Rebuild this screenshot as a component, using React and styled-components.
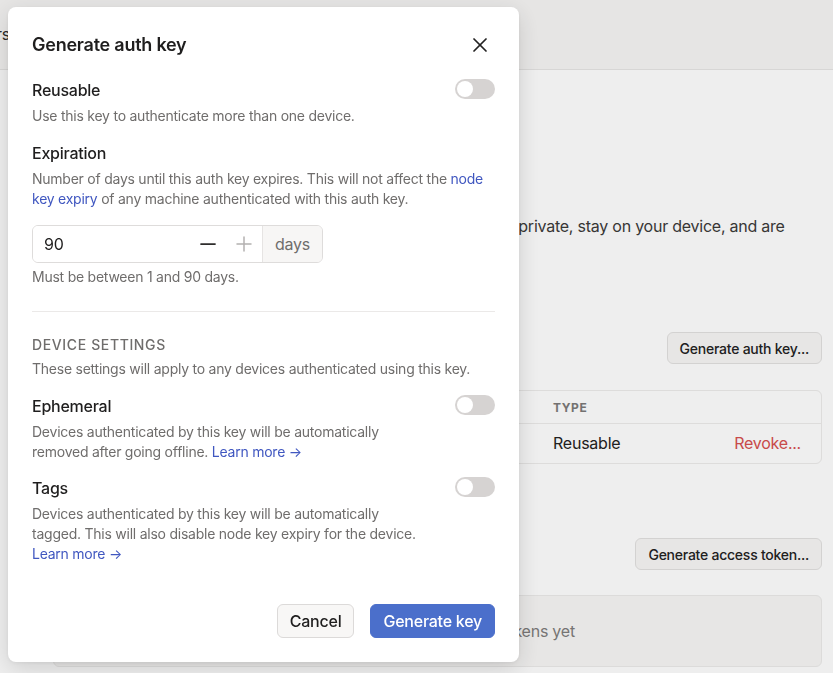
import React, { useState } from 'react';
import styled, { createGlobalStyle } from 'styled-components';
import { X, Minus, Plus } from 'lucide-react';

const GlobalStyle = createGlobalStyle`
  html, body {
    margin: 0;
    padding: 0;
    background: #fbfbfb;
  }
  body {
    font-family: Inter, "Noto Sans", "Liberation Sans", sans-serif;
    color: #232222;
    letter-spacing: -0.015em;
    -webkit-font-smoothing: antialiased;
  }
  button, input {
    letter-spacing: inherit;
  }
  * {
    box-sizing: border-box;
  }
`;

const Page = styled.div`
  width: 100vw;
  height: 100vh;
  overflow: hidden;
  display: flex;
  flex-direction: column;
  background: #fbfbfb;
`;

const Header = styled.header`
  height: 70px;
  flex-shrink: 0;
  background: #f3f2f1;
  border-bottom: 1px solid #e3e2e1;
  display: flex;
  align-items: center;
  overflow: hidden;
`;

const Nav = styled.nav`
  display: flex;
  gap: 28px;
  margin-left: -33px;
  padding-bottom: 2px;
`;

const NavItem = styled.span`
  font-size: 16px;
  color: #2e2d2c;
  white-space: nowrap;
`;

const Main = styled.main`
  padding: 40px 11px 0 53px;
  display: flex;
  flex-direction: column;
`;

const PageTitle = styled.h1`
  margin: 0 0 40px;
  font-size: 24px;
  line-height: 32px;
  font-weight: 600;
`;

const SectionTitle = styled.h2`
  margin: 0 0 4px;
  font-size: 18px;
  line-height: 28px;
  font-weight: 600;
`;

const Paragraph = styled.p`
  margin: 0;
  font-size: 16px;
  line-height: 24px;
  color: #3a3938;
`;

const Toolbar = styled.div`
  display: flex;
  justify-content: flex-end;
  margin-top: ${(p) => p.$top}px;
`;

const PageButton = styled.button`
  height: 32px;
  padding: 0 12px;
  font: inherit;
  font-size: 14px;
  font-weight: 500;
  color: #232222;
  background: #f4f3f2;
  border: 1px solid #dfdedd;
  border-radius: 6px;
`;

const Table = styled.div`
  margin-top: 26px;
  border: 1px solid #e9e8e7;
  border-radius: 6px;
  background: #fbfbfb;
`;

const TableRow = styled.div`
  display: grid;
  grid-template-columns: 200px 140px 140px 1fr auto;
  align-items: center;
  padding: 0 20px 0 19px;
  height: ${(p) => (p.$head ? 32 : 40)}px;
  border-top: ${(p) => (p.$head ? 'none' : '1px solid #e9e8e7')};
`;

const HeadCell = styled.div`
  font-size: 12px;
  font-weight: 700;
  letter-spacing: 0.05em;
  color: #7a7877;
`;

const Cell = styled.div`
  font-size: 16px;
  padding-bottom: 2px;
  color: ${(p) => (p.$danger ? '#d34e4e' : '#232222')};
  white-space: nowrap;
`;

const EmptyCard = styled.div`
  margin-top: 25px;
  height: 72px;
  padding-left: 16px;
  border: 1px solid #e8e7e6;
  border-radius: 6px;
  background: #f4f3f2;
  display: flex;
  align-items: center;
  justify-content: center;
  font-size: 16px;
  color: #7d7b7a;
`;

const Mask = styled.div`
  position: fixed;
  inset: 0;
  background: rgba(0, 0, 0, 0.05);
`;

const Modal = styled.div`
  position: fixed;
  top: 7px;
  left: 8px;
  width: 511px;
  background: #ffffff;
  border-radius: 8px;
  box-shadow: 0 6px 24px rgba(0, 0, 0, 0.14), 0 1px 4px rgba(0, 0, 0, 0.06);
  padding: 24px;
  display: flex;
  flex-direction: column;
`;

const ModalHeader = styled.div`
  display: flex;
  align-items: center;
  justify-content: space-between;
  margin-bottom: 19px;
`;

const ModalTitle = styled.h2`
  margin: 0;
  font-size: 18px;
  line-height: 28px;
  font-weight: 600;
  color: #1f1e1e;
`;

const CloseButton = styled.button`
  display: flex;
  padding: 0;
  margin-right: 3px;
  border: none;
  background: none;
  color: #232222;
`;

const Field = styled.div`
  display: flex;
  flex-direction: column;
  margin-top: ${(p) => p.$top || 0}px;
`;

const FieldRow = styled.div`
  display: flex;
  align-items: flex-start;
  justify-content: space-between;
  gap: 24px;
`;

const FieldText = styled.div`
  max-width: 392px;
`;

const Label = styled.div`
  font-size: 16px;
  line-height: 24px;
  font-weight: 500;
  color: #1f1e1e;
`;

const Help = styled.div`
  margin-top: 4px;
  font-size: 14px;
  line-height: 20px;
  color: #6f6d6c;
`;

const Link = styled.a`
  color: #4057c0;
  text-decoration: none;
`;

const Toggle = styled.button`
  flex-shrink: 0;
  width: 40px;
  height: 20px;
  margin-top: 1px;
  padding: 2px;
  border: none;
  border-radius: 10px;
  background: ${(p) => (p.$on ? '#4b6fcb' : '#d6d3d2')};
  display: flex;
  justify-content: ${(p) => (p.$on ? 'flex-end' : 'flex-start')};
  cursor: pointer;
`;

const Knob = styled.span`
  width: 16px;
  height: 16px;
  border-radius: 50%;
  background: #ffffff;
`;

const InputGroup = styled.div`
  margin-top: 16px;
  width: 291px;
  height: 38px;
  display: flex;
  border: 1px solid #dedcdb;
  border-radius: 6px;
  overflow: hidden;
`;

const NumberInput = styled.input`
  flex: 1;
  min-width: 0;
  border: none;
  outline: none;
  padding: 0 0 0 11px;
  font: inherit;
  font-size: 16px;
  color: #1f1e1e;
`;

const StepButton = styled.button`
  width: 36px;
  display: flex;
  align-items: center;
  justify-content: center;
  padding: 0;
  border: none;
  background: #fff;
  color: ${(p) => (p.disabled ? '#b3b1b0' : '#2e2d2c')};
`;

const Addon = styled.div`
  width: 60px;
  display: flex;
  align-items: center;
  justify-content: center;
  border-left: 1px solid #e6e4e3;
  background: #f7f6f5;
  font-size: 16px;
  color: #6f6d6c;
`;

const Divider = styled.hr`
  margin: 24px 0 0;
  border: none;
  border-top: 1px solid #ebe9e8;
`;

const Overline = styled.div`
  margin-top: 23px;
  font-size: 14px;
  line-height: 20px;
  font-weight: 500;
  letter-spacing: 0.045em;
  text-transform: uppercase;
  color: #6f6d6c;
`;

const Footer = styled.div`
  margin-top: 40px;
  display: flex;
  justify-content: flex-end;
  gap: 16px;
`;

const Button = styled.button`
  height: 34px;
  padding: 0 12px;
  font: inherit;
  font-size: 16px;
  font-weight: 500;
  border-radius: 6px;
  border: 1px solid ${(p) => (p.$primary ? '#4b6fcb' : '#dcdad9')};
  background: ${(p) => (p.$primary ? '#4b6fcb' : '#f8f7f6')};
  color: ${(p) => (p.$primary ? '#ffffff' : '#1f1e1e')};
`;

const ToggleField = ({ label, children, on, onChange, top }) => (
  <Field $top={top}>
    <FieldRow>
      <FieldText>
        <Label>{label}</Label>
        <Help>{children}</Help>
      </FieldText>
      <Toggle $on={on} onClick={onChange} aria-pressed={on}>
        <Knob />
      </Toggle>
    </FieldRow>
  </Field>
);

export default function App() {
  const [reusable, setReusable] = useState(false);
  const [ephemeral, setEphemeral] = useState(false);
  const [tags, setTags] = useState(false);
  const [days, setDays] = useState(90);

  return (
    <>
      <GlobalStyle />
      <Page>
        <Header>
          <Nav>
            <NavItem>Users</NavItem>
            <NavItem>Access controls</NavItem>
            <NavItem>Logs</NavItem>
            <NavItem>DNS</NavItem>
            <NavItem>Settings</NavItem>
          </Nav>
        </Header>
        <Main>
          <PageTitle>Keys</PageTitle>
          <SectionTitle>Auth keys</SectionTitle>
          <Paragraph>
            Auth keys let you add new devices to your tailnet. The keys are private, stay on your device, and are
            shared with no one else.
          </Paragraph>
          <Toolbar $top={70}>
            <PageButton>Generate auth key...</PageButton>
          </Toolbar>
          <Table>
            <TableRow $head>
              <HeadCell>KEY</HeadCell>
              <HeadCell>CREATED</HeadCell>
              <HeadCell>EXPIRES</HeadCell>
              <HeadCell>TYPE</HeadCell>
              <HeadCell />
            </TableRow>
            <TableRow>
              <Cell>tskey-auth-k8</Cell>
              <Cell>Mar 3</Cell>
              <Cell>Jun 1</Cell>
              <Cell>Reusable</Cell>
              <Cell $danger>Revoke...</Cell>
            </TableRow>
          </Table>
          <Toolbar $top={74}>
            <PageButton>Generate access token...</PageButton>
          </Toolbar>
          <EmptyCard>There are no API access tokens yet</EmptyCard>
        </Main>
      </Page>
      <Mask />
      <Modal role="dialog">
        <ModalHeader>
          <ModalTitle>Generate auth key</ModalTitle>
          <CloseButton aria-label="Close">
            <X size={24} strokeWidth={1.75} />
          </CloseButton>
        </ModalHeader>

        <ToggleField label="Reusable" on={reusable} onChange={() => setReusable(!reusable)}>
          Use this key to authenticate more than one device.
        </ToggleField>

        <Field $top={15}>
          <Label>Expiration</Label>
          <Help>
            Number of days until this auth key expires. This will not affect the{' '}
            <Link href="#">node key expiry</Link> of any machine authenticated with this auth key.
          </Help>
          <InputGroup>
            <NumberInput value={days} onChange={(e) => setDays(e.target.value)} />
            <StepButton onClick={() => setDays(Math.max(1, days - 1))}>
              <Minus size={24} strokeWidth={1.75} />
            </StepButton>
            <StepButton disabled={days >= 90}>
              <Plus size={24} strokeWidth={1.5} />
            </StepButton>
            <Addon>days</Addon>
          </InputGroup>
          <Help>Must be between 1 and 90 days.</Help>
        </Field>

        <Divider />

        <Overline>Device settings</Overline>
        <Help>These settings will apply to any devices authenticated using this key.</Help>

        <ToggleField top={15} label="Ephemeral" on={ephemeral} onChange={() => setEphemeral(!ephemeral)}>
          Devices authenticated by this key will be automatically removed after going offline.{' '}
          <Link href="#">Learn more →</Link>
        </ToggleField>

        <ToggleField top={14} label="Tags" on={tags} onChange={() => setTags(!tags)}>
          Devices authenticated by this key will be automatically tagged. This will also disable node key
          expiry for the device. <Link href="#">Learn more →</Link>
        </ToggleField>

        <Footer>
          <Button>Cancel</Button>
          <Button $primary>Generate key</Button>
        </Footer>
      </Modal>
    </>
  );
}
